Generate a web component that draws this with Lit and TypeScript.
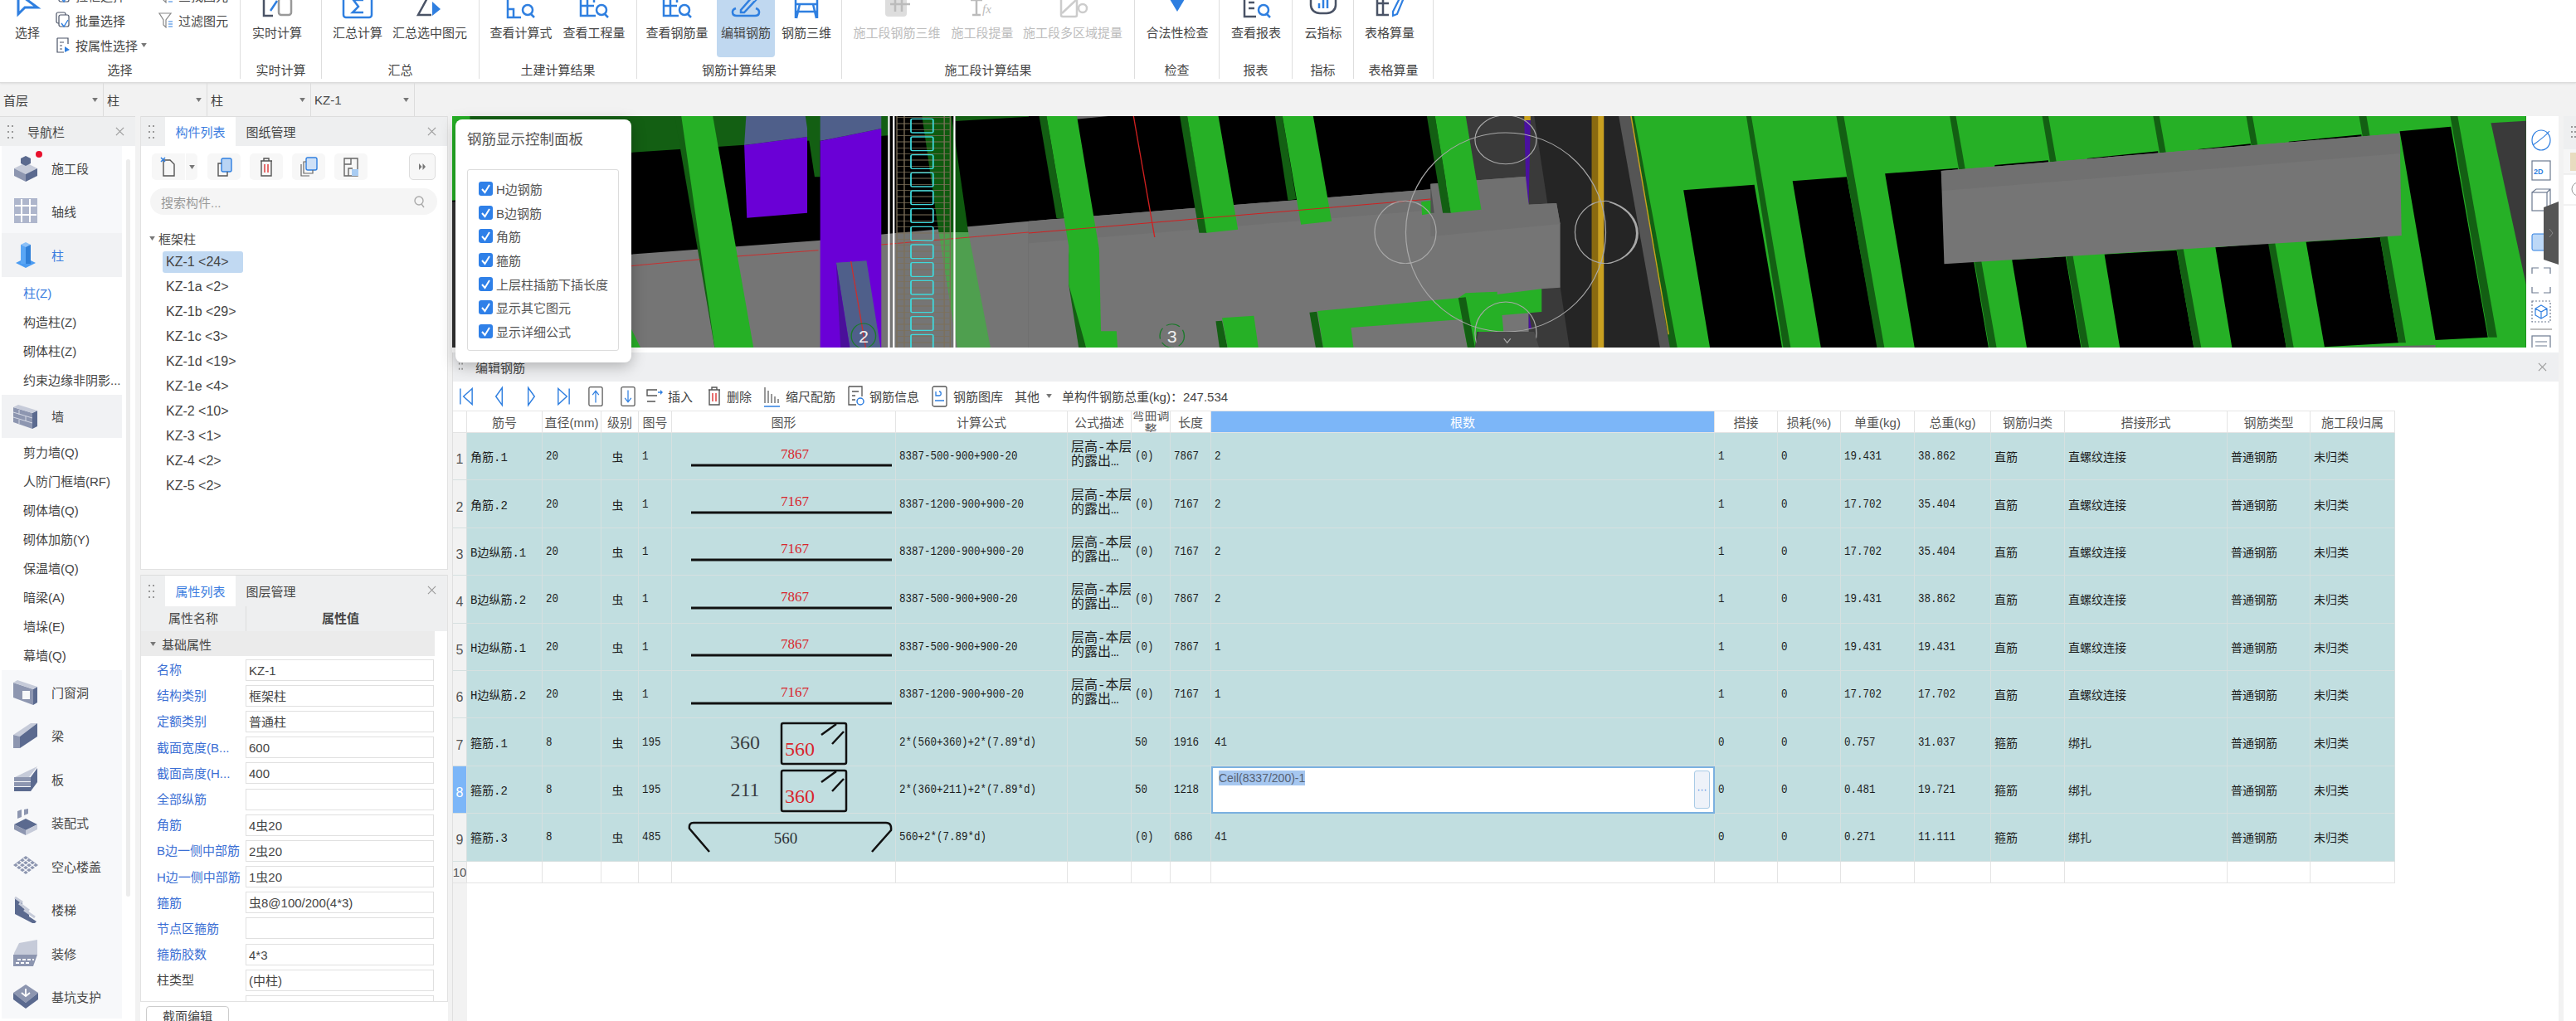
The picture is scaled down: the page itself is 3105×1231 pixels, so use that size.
import { LitElement, html, css, svg } from "lit";
import { customElement } from "lit/decorators.js";

const BLUE = "#2f7fe0";
const DARK = "#4a5366";

// ribbon icons, their tops run off the window on purpose
const ribbonIcons: Record<string, any> = {
  select: svg`<path d="M9 -8V17L17 9H32Z" fill="none" stroke="${BLUE}" stroke-width="3"/>`,
  live: svg`<path d="M4 -2V19H15" fill="none" stroke="${DARK}" stroke-width="2.5"/><rect x="22" y="-2" width="15" height="20" rx="3" fill="none" stroke="#999" stroke-width="2.5"/><path d="M12 13L20 1" stroke="${BLUE}" stroke-width="2.5"/>`,
  sum: svg`<rect x="3" y="-6" width="34" height="27" rx="3" fill="none" stroke="${BLUE}" stroke-width="2.5"/><path d="M27 0H15L21 8L14 15H27" fill="none" stroke="${BLUE}" stroke-width="2.5"/>`,
  sumSel: svg`<path d="M18 -4L6 18H22" fill="none" stroke="${DARK}" stroke-width="2.5"/><path d="M23 2L33 11L23 19Z" fill="${BLUE}"/>`,
  calcQ: svg`<path d="M4 -6V21H20M4 11H11V21" fill="none" stroke="${BLUE}" stroke-width="2.5"/><path d="M14 -4H36" stroke="${BLUE}" stroke-width="2.5"/><circle cx="28" cy="12" r="6" fill="none" stroke="${BLUE}" stroke-width="2.5"/><path d="M32 17L36 21" stroke="${BLUE}" stroke-width="2.5"/>`,
  gridQ: svg`<path d="M4 -6V19H22M4 7H20M12 -6V19M20 -6V3" fill="none" stroke="${BLUE}" stroke-width="2.5"/><circle cx="29" cy="12" r="6" fill="none" stroke="${BLUE}" stroke-width="2.5"/><path d="M33 17L37 21" stroke="${BLUE}" stroke-width="2.5"/>`,
  edit: svg`<path d="M8 10C2 12 3 19 9 19H31C37 19 38 12 32 10" fill="none" stroke="${BLUE}" stroke-width="2.5"/><path d="M14 12L28 -4L32 0L18 15H14Z" fill="none" stroke="${BLUE}" stroke-width="2.5"/>`,
  rebar3d: svg`<path d="M7 -6V22M33 -6V22M7 5H33M7 14H33M12 5L8 22M28 5L32 22" fill="none" stroke="${BLUE}" stroke-width="2.5"/>`,
  offA: svg`<rect x="6" y="-8" width="26" height="28" rx="4" fill="#ddd"/><path d="M12 -2H36M12 5H36M18 -8V14M26 -8V14" stroke="#bbb" stroke-width="2.5"/>`,
  offB: svg`<path d="M6 0H20M13 0V18M8 18H18" stroke="#bbb" stroke-width="2.5" fill="none"/><text x="20" y="16" font-size="15" font-style="italic" fill="#bbb" font-family="Liberation Serif">fx</text>`,
  offC: svg`<rect x="6" y="-8" width="19" height="28" rx="2" fill="none" stroke="#ccc" stroke-width="2.5"/><path d="M7 16L24 0" stroke="#ccc" stroke-width="2.5"/><circle cx="32" cy="10" r="5" fill="none" stroke="#ccc" stroke-width="2.5"/>`,
  check: svg`<path d="M8 -6L20 14L32 -6" fill="${BLUE}"/>`,
  report: svg`<path d="M6 -6V20H20M6 -6H30" fill="none" stroke="${DARK}" stroke-width="2.5"/><path d="M11 3H18M11 10H18" stroke="${DARK}" stroke-width="2.5"/><circle cx="29" cy="12" r="6" fill="none" stroke="${BLUE}" stroke-width="2.5"/><path d="M33 17L37 21" stroke="${BLUE}" stroke-width="2.5"/>`,
  cloud: svg`<path d="M5 -6V6C5 12 10 16 16 16H24C30 16 35 12 35 6V-6" fill="none" stroke="${DARK}" stroke-width="2.5"/><path d="M15 10V4M20 10V-2M25 10V0" stroke="${BLUE}" stroke-width="2.5"/>`,
  table: svg`<path d="M5 -6V18H19M5 4H19M12 -6V18" fill="none" stroke="${DARK}" stroke-width="2.5"/><path d="M24 14L32 -2L36 0L29 17L24 19Z" fill="none" stroke="${BLUE}" stroke-width="2.2"/>`,
};

const smallIcons: Record<string, any> = {
  batch: svg`<rect x="2" y="1" width="11" height="13" rx="2" fill="none" stroke="${DARK}" stroke-width="1.2"/><rect x="5" y="4" width="12" height="14" rx="2" fill="#fff" stroke="${DARK}" stroke-width="1.2"/><path d="M8 14L11 18L16 10" fill="none" stroke="${BLUE}" stroke-width="1.4"/>`,
  filter: svg`<path d="M2 2H16L10 10V19L7 16V10Z" fill="none" stroke="#888" stroke-width="1.2"/><path d="M13 12H18M13 15H18M13 18H18" stroke="${BLUE}" stroke-width="1.2"/>`,
  attr: svg`<path d="M3 2H16V9M3 2V19H11" fill="none" stroke="${DARK}" stroke-width="1.2"/><path d="M6 7H11M6 11H9M6 15H9" stroke="${DARK}" stroke-width="1.2"/><path d="M12 12L18 16L12 19Z" fill="${BLUE}"/>`,
  newDoc: svg`<path d="M6 5H14L19 10V24H6Z" fill="none" stroke="#555" stroke-width="1.4"/><path d="M3 2L8 7M8 2L3 7" stroke="${BLUE}" stroke-width="1.5"/>`,
  copy: svg`<rect x="9" y="3" width="12" height="16" rx="2" fill="#b9d4f4" stroke="${BLUE}" stroke-width="1.4"/><path d="M9 9H5V24H16V19" fill="none" stroke="#555" stroke-width="1.4"/>`,
  trash: svg`<path d="M5 6H19M9 6V3H15V6M6 6V24H18V6" fill="none" stroke="#555" stroke-width="1.4"/><path d="M10 10V20M14 10V20" stroke="#d33" stroke-width="1.4"/>`,
  dup: svg`<rect x="9" y="2" width="13" height="15" rx="2" fill="#cfe1f7" stroke="${BLUE}" stroke-width="1.4"/><path d="M9 7H6V21H17V17M3 10V24H13" fill="none" stroke="#666" stroke-width="1.2"/>`,
  save: svg`<path d="M4 3H20V24H4ZM4 10H12V3M9 24V15H14" fill="none" stroke="#666" stroke-width="1.4"/><rect x="13" y="16" width="8" height="8" fill="#a9ccf2"/>`,
  first: svg`<path d="M3 4V24" stroke="${BLUE}" stroke-width="1.5"/><path d="M18 4L7 14L18 24Z" fill="none" stroke="${BLUE}" stroke-width="1.5"/>`,
  prev: svg`<path d="M15 3L7 14L15 25Z" fill="none" stroke="${BLUE}" stroke-width="1.5"/>`,
  next: svg`<path d="M7 3L15 14L7 25Z" fill="none" stroke="${BLUE}" stroke-width="1.5"/>`,
  last: svg`<path d="M18 4V24" stroke="${BLUE}" stroke-width="1.5"/><path d="M4 4L15 14L4 24Z" fill="none" stroke="${BLUE}" stroke-width="1.5"/>`,
  up: svg`<rect x="2" y="2" width="17" height="24" rx="2" fill="none" stroke="#555" stroke-width="1.3"/><path d="M10.5 22V8M6.5 12L10.5 7L14.5 12" fill="none" stroke="${BLUE}" stroke-width="1.3"/>`,
  down: svg`<rect x="2" y="2" width="17" height="24" rx="2" fill="none" stroke="#555" stroke-width="1.3"/><path d="M10.5 6V20M6.5 16L10.5 21L14.5 16" fill="none" stroke="${BLUE}" stroke-width="1.3"/>`,
  insert: svg`<path d="M14 6H2V13H14M2 20H12" fill="none" stroke="#555" stroke-width="1.4"/><path d="M15 9H19" stroke="${BLUE}" stroke-width="1.5"/><path d="M18 6L21 9L18 12Z" fill="${BLUE}"/>`,
  scale: svg`<path d="M2 3V22M6 7V22M10 11V22M14 14V22M18 17V22" stroke="#555" stroke-width="1.2"/><path d="M1 26H20" stroke="${BLUE}" stroke-width="1.5"/>`,
  info: svg`<path d="M2 2H18V14M2 2V24H11" fill="none" stroke="#555" stroke-width="1.3"/><path d="M6 8H14M6 13H10M6 18H10" stroke="#555" stroke-width="1.3"/><circle cx="16" cy="20" r="4" fill="none" stroke="${BLUE}" stroke-width="1.5"/>`,
  library: svg`<rect x="2" y="2" width="17" height="24" rx="2" fill="none" stroke="#555" stroke-width="1.3"/><path d="M6 8V13H10C13 13 13 8 10 8M5 19H16" fill="none" stroke="${BLUE}" stroke-width="1.3"/>`,
};

const A = "#c6cbd9", B = "#8d96b0", C = "#5b6a8f";
const navIcons: Record<string, any> = {
  stage: svg`<polygon points="16,10 30,17 16,24 2,17" fill="${A}"/><polygon points="2,17 16,24 16,33 2,26" fill="${B}"/><polygon points="30,17 16,24 16,33 30,26" fill="${C}"/><polygon points="16,2 22,5 22,11 16,14 10,11 10,5" fill="${C}"/>`,
  axis: svg`<rect x="2" y="1" width="28" height="30" fill="#aeb6cc"/><path d="M11 2V30M21 2V30M3 10H29M3 21H29" stroke="#fff" stroke-width="2"/>`,
  column: svg`<polygon points="16,20 28,26 16,32 4,26" fill="#4b9cf2"/><rect x="10" y="4" width="12" height="23" fill="#2f7fd8"/><rect x="10" y="4" width="6" height="23" fill="#5aa6f5"/><polygon points="10,4 16,1 22,4 16,7" fill="#8cc0f7"/>`,
  wall: svg`<polygon points="1,6 24,13 24,32 1,24" fill="${B}"/><polygon points="24,13 30,10 30,29 24,32" fill="${C}"/><polygon points="1,6 7,3 30,10 24,13" fill="${A}"/><path d="M1 12L24 19M1 18L24 25M8 9V15M16 17V23M8 21V26" stroke="#d5d9e4" stroke-width="1"/>`,
  door: svg`<polygon points="1,5 25,13 25,32 1,23" fill="${B}"/><polygon points="25,13 30,10 30,29 25,32" fill="${C}"/><polygon points="1,5 6,2 30,10 25,13" fill="${A}"/><rect x="12" y="15" width="9" height="10" fill="#f7f8fa"/>`,
  beam: svg`<polygon points="1,16 22,2 30,2 9,18" fill="${A}"/><polygon points="9,18 30,2 30,18 9,32" fill="${C}"/><polygon points="1,16 9,18 9,32 1,32" fill="${B}"/>`,
  slab: svg`<polygon points="3,14 30,1 20,14 3,14" fill="${A}"/><rect x="2" y="14" width="20" height="5" fill="${B}"/><rect x="2" y="20" width="20" height="5" fill="${B}"/><rect x="2" y="26" width="20" height="5" fill="${C}"/><polygon points="22,14 30,3 30,20 22,31" fill="${C}"/>`,
  prefab: svg`<polygon points="16,12 30,19 16,26 2,19" fill="${C}"/><polygon points="2,19 16,26 16,32 2,25" fill="${B}"/><polygon points="30,19 16,26 16,32 30,25" fill="${A}"/><path d="M6 3L11 1V10L6 12ZM14 1L19 0V6L14 8Z" fill="${B}"/>`,
  hollow: svg`<polygon points="16,4 31,15 16,26 1,15" fill="${B}"/><path d="M9 10L24 21M13 7L28 18M5 13L20 24M23 10L8 21M19 7L4 18M27 13L12 24" stroke="#f7f8fa" stroke-width="1.5"/>`,
  stair: svg`<polygon points="3,2 12,8 12,14 20,20 20,25 29,31 26,34 3,22" fill="${C}"/><path d="M3 2L12 8M8 9L20 18M14 17L27 26" stroke="${A}" stroke-width="3"/>`,
  finish: svg`<polygon points="8,4 30,0 30,18 1,30 2,16" fill="${A}"/><polygon points="1,18 30,18 25,32 1,32" fill="${B}"/><path d="M6 24H26M4 28H22" stroke="#fff" stroke-width="2" stroke-dasharray="4 2"/>`,
  pit: svg`<polygon points="16,2 31,12 16,24 1,12" fill="${B}"/><polygon points="1,12 16,24 16,31 1,20" fill="${C}"/><polygon points="31,12 16,24 16,31 31,20" fill="${C}"/><path d="M16 7V15M11 12L16 16L21 12" stroke="#fff" stroke-width="1.8" fill="none"/>`,
};

const G = "#26b026", DG = "#135f13", GRAY = "#757575", VIO = "#6a00d6", SLATE = "#4f5f8a";

// polygons traced in the coordinates of three crops of the 3D view
const leftPolys: [string, string][] = [
  ["#333", "11,340 60,340 60,868 11,868"],
  [G, "11,30 60,30 60,330 11,335"],
  [GRAY, "60,590 495,530 1000,480 1190,455 1568,410 1568,868 60,868"],
  [DG, "60,30 1190,30 1190,100 60,200"],
  [G, "420,560 495,800 520,868 420,868"],
  [DG, "612,30 632,30 740,868 720,868"],
  [G, "630,30 715,30 825,868 720,868"],
  [SLATE, "805,30 970,30 970,105 800,135"],
  [VIO, "800,135 970,105 970,380 807,398"],
  [DG, "965,30 1005,30 1005,250 990,250"],
  [SLATE, "1005,30 1170,30 1170,75 1005,120"],
  [VIO, "1005,120 1170,75 1170,868 1005,868"],
  [SLATE, "1048,560 1130,553 1168,868 1085,868"],
  ["#4a0f9a", "1048,560 1085,868 1060,868"],
  ["#0f5a0f", "1280,30 1360,30 1405,450 1325,450"],
  ["#4f9f4f", "1325,450 1405,450 1465,868 1375,868"],
  [DG, "1370,30 1568,30 1568,32 1370,48"],
];

const midPolys: [string, string][] = [
  ["#252525", "1180,30 1568,30 1568,868 1180,868"],
  ["#3a3a3a", "1180,30 1365,30 1460,868 1200,868"],
  ["#6a6a6a", "95,30 215,30 100,45"],
  [GRAY, "0,410 1085,295 1085,275 1345,248 1350,350 1425,345 1435,420 1435,650 1385,655 1350,745 1350,810 1210,810 1200,868 0,868"],
  ["#707070", "0,410 1085,295 1085,370 0,490"],
  ["#707070", "1085,275 1345,248 1350,350 1425,345 1435,420 1085,465"],
  [DG, "28,30 48,30 95,400 75,400"],
  [DG, "108,520 155,868 135,868 108,640"],
  [G, "48,30 130,30 190,510 195,808 237,808 240,868 155,868 108,640 108,500"],
  [DG, "408,30 428,30 482,452 460,452"],
  [G, "428,30 512,30 565,440 480,452"],
  [DG, "665,30 685,30 722,330 700,335"],
  [G, "685,30 768,30 818,410 735,422"],
  [G, "1060,340 1088,335 1092,380 1062,388"],
  ["#505050", "1085,278 1095,380 1085,380"],
  [DG, "1075,30 1097,30 1140,380 1118,380"],
  [G, "1097,30 1180,30 1222,368 1140,380"],
  [DG, "505,772 522,770 537,868 515,868"],
  [G, "522,760 608,752 620,868 537,868"],
  [G, "780,735 1160,688 1180,670 1265,665 1265,675 1385,655 1385,738 1278,750 1282,810 1210,810 1205,868 1185,868 1170,765 870,795 877,868 795,868"],
  [DG, "758,740 778,737 795,868 775,868"],
  [DG, "1160,688 1180,685 1205,868 1185,868"],
  ["#8a6a10", "1520,30 1537,30 1537,868 1520,868"],
  ["#c9a020", "1537,30 1553,30 1553,868 1537,868"],
  ["#c9a020", "1338,30 1355,30 1355,45 1338,45"],
  ["#4a10a0", "1338,45 1355,45 1350,350 1342,250"],
  ["#4a10a0", "1350,742 1358,800 1350,800"],
];

const rightPolys: [string, string][] = [
  ["#252525", "0,30 35,30 100,868 0,868"],
  ["#555", "15,30 35,30 100,868 82,868"],
  [G, "35,30 1487,30 1487,868 100,868"],
  ["#000", "120,298 235,278 280,868 163,868"],
  ["#000", "297,265 385,250 435,868 343,868"],
  ["#000", "447,238 565,218 615,868 495,868"],
  ["#000", "625,207 712,190 712,230 625,230"],
  ["#000", "653,550 740,538 765,868 677,868"],
  ["#000", "775,183 890,157 890,200 775,200"],
  ["#000", "803,530 920,515 948,868 828,868"],
  ["#000", "955,150 1040,130 1040,160 955,160"],
  ["#000", "983,505 1070,490 1098,868 1010,868"],
  ["#000", "1102,122 1220,97 1220,130 1102,130"],
  ["#000", "1130,485 1250,468 1280,850 1160,865"],
  ["#000", "1282,85 1365,68 1425,830 1340,840"],
  ["#3a3a3a", "1430,55 1487,47 1487,640"],
  ["#6a6a6a", "1160,868 1340,858 1340,868"],
  [DG, "35,30 40,30 110,868 98,868"],
  [DG, "222,30 230,30 294,868 282,868"],
  [DG, "368,30 380,30 446,868 434,868"],
  [DG, "552,30 562,30 628,868 616,868"],
  [DG, "702,30 712,30 778,868 766,868"],
  [DG, "882,30 892,30 960,868 948,868"],
  [DG, "1033,30 1043,30 1110,868 1098,868"],
  [DG, "1216,30 1228,30 1292,850 1280,850"],
  [DG, "1364,30 1376,30 1440,830 1426,830"],
  [GRAY, "538,228 1282,92 1285,462 543,565"],
  ["#707070", "538,228 1282,92 1283,165 540,300"],
];

const polys = (list: [string, string][]) => list.map(([f, p]) => svg`<polygon points="${p}" fill="${f}"/>`);

type Row = {
  name: string; d: string; no: string; shape: any; formula: string; desc: boolean;
  adj: string; len: string; n: string; lap: string; unit: string; total: string; cls: string; form: string;
};

const barShape = (v: string) => svg`<svg class="shape" viewBox="0 0 270 57"><text x="148" y="31" text-anchor="middle" font-size="17" fill="#d8262c">${v}</text><path d="M23 39H265" stroke="#111" stroke-width="3"/></svg>`;
const hoopShape = (a: string, b: string) => svg`<svg class="shape" viewBox="0 0 270 57"><text x="88" y="37" text-anchor="middle" font-size="24" fill="#3a3f44">${a}</text><rect x="132" y="6" width="78" height="49" rx="2" fill="none" stroke="#111" stroke-width="2.5"/><path d="M180 20L198 7M193 31L207 16" stroke="#111" stroke-width="2.5"/><text x="136" y="45" font-size="24" fill="#d8262c">${b}</text></svg>`;
const hookShape = svg`<svg class="shape" viewBox="0 0 270 57"><path d="M45 46L21 18Q20 11 26 11H258Q265 11 264 20L241 46" fill="none" stroke="#111" stroke-width="2.5"/><text x="137" y="36" text-anchor="middle" font-size="19" fill="#2d3236">560</text></svg>`;

const straight = (name: string, v: string, formula: string, n: string, unit: string, total: string): Row =>
  ({ name, d: "20", no: "1", shape: barShape(v), formula, desc: true, adj: "(0)", len: v, n, lap: "1", unit, total, cls: "直筋", form: "直螺纹连接" });
const F1 = "8387-500-900+900-20", F2 = "8387-1200-900+900-20";

const rows: Row[] = [
  straight("角筋.1", "7867", F1, "2", "19.431", "38.862"),
  straight("角筋.2", "7167", F2, "2", "17.702", "35.404"),
  straight("B边纵筋.1", "7167", F2, "2", "17.702", "35.404"),
  straight("B边纵筋.2", "7867", F1, "2", "19.431", "38.862"),
  straight("H边纵筋.1", "7867", F1, "1", "19.431", "19.431"),
  straight("H边纵筋.2", "7167", F2, "1", "17.702", "17.702"),
  { name: "箍筋.1", d: "8", no: "195", shape: hoopShape("360", "560"), formula: "2*(560+360)+2*(7.89*d)", desc: false, adj: "50", len: "1916", n: "41", lap: "0", unit: "0.757", total: "31.037", cls: "箍筋", form: "绑扎" },
  { name: "箍筋.2", d: "8", no: "195", shape: hoopShape("211", "360"), formula: "2*(360+211)+2*(7.89*d)", desc: false, adj: "50", len: "1218", n: "", lap: "0", unit: "0.481", total: "19.721", cls: "箍筋", form: "绑扎" },
  { name: "箍筋.3", d: "8", no: "485", shape: hookShape, formula: "560+2*(7.89*d)", desc: false, adj: "(0)", len: "686", n: "41", lap: "0", unit: "0.271", total: "11.111", cls: "箍筋", form: "绑扎" },
];

const heads = ["筋号", "直径(mm)", "级别", "图号", "图形", "计算公式", "公式描述", "弯曲调整", "长度", "根数", "搭接", "损耗(%)", "单重(kg)", "总重(kg)", "钢筋归类", "搭接形式", "钢筋类型", "施工段归属"];

const props: [string, string, boolean][] = [
  ["名称", "KZ-1", true], ["结构类别", "框架柱", true], ["定额类别", "普通柱", true], ["截面宽度(B...", "600", true],
  ["截面高度(H...", "400", true], ["全部纵筋", "", true], ["角筋", "4虫20", true], ["B边一侧中部筋", "2虫20", true],
  ["H边一侧中部筋", "1虫20", true], ["箍筋", "虫8@100/200(4*3)", true], ["节点区箍筋", "", true], ["箍筋胶数", "4*3", true],
  ["柱类型", "(中柱)", false], ["", "", false],
];

const closeX = html`<svg class="x" viewBox="0 0 12 12"><path d="M1 1L11 11M11 1L1 11" stroke="#999" stroke-width="1.2"/></svg>`;
const grip = html`<svg class="grip" viewBox="0 0 10 20"><path d="M2 2h2v2H2zM7 2h2v2H7zM2 9h2v2H2zM7 9h2v2H7zM2 16h2v2H2zM7 16h2v2H7z" fill="#999"/></svg>`;
const arrow = html`<svg class="arrow" viewBox="0 0 8 6"><path d="M0 0H8L4 6Z" fill="#777"/></svg>`;

@customElement("app-root")
export class AppRoot extends LitElement {
  static styles = css`
    :host {
      display: block;
      width: 3105px;
      height: 1231px;
      overflow: hidden;
      background: #f2f2f2;
      font: 15px "Liberation Sans", "Noto Sans CJK SC", sans-serif;
      color: #454545;
    }
    svg { display: block; }

    .ribbon { display: flex; height: 100px; background: #fff; border-bottom: 1px solid #dcdcdc; overflow: hidden; box-sizing: border-box; box-shadow: 0 1px 2px #ddd; }
    .group { height: 95px; border-right: 1px solid #dedede; box-sizing: border-box; display: flex; flex-direction: column; flex: none; }
    .btns { display: flex; height: 69px; flex: none; }
    .glabel { text-align: center; line-height: 32px; white-space: nowrap; }
    .rb { display: flex; flex-direction: column; align-items: center; flex: none; border-radius: 0 0 4px 4px; white-space: nowrap; }
    .rb svg { width: 40px; height: 28px; overflow: hidden; flex: none; }
    .rb span { line-height: 24px; }
    .rb.on { background: #c0d8f0; }
    .rb.off { color: #bdbdbd; }
    .g-select { width: 290px; }
    .g-live { width: 98px; }
    .g-sum { width: 190px; }
    .g-civil { width: 190px; }
    .g-rebar { width: 247px; }
    .g-stage { width: 353px; }
    .g-check { width: 102px; }
    .g-report { width: 88px; }
    .g-index { width: 74px; }
    .g-table { width: 96px; }
    .sel { display: grid; grid-template-columns: 124px 100px; grid-auto-rows: 30px; margin-top: -21px; }
    .sel div { display: flex; align-items: center; gap: 5px; white-space: nowrap; }
    .sel svg { width: 20px; height: 20px; flex: none; }
    .sel .arrow { width: 7px; height: 5px; margin-left: -1px; }

    .combo { display: flex; height: 40px; margin-top: 0; }
    .combo div { width: 125px; box-sizing: border-box; border-right: 1px solid #dcdcdc; display: flex; align-items: center; justify-content: space-between; padding: 0 6px 0 4px; }

    .main { display: flex; height: 1091px; position: relative; }
    .arrow { width: 7px; height: 5px; }

    .nav { width: 163px; flex: none; background: #fff; display: flex; flex-direction: column; }
    .phead { height: 36px; flex: none; background: #eeeff0; display: flex; align-items: center; position: relative; box-sizing: border-box; border-top: 1px solid #ddd; }
    .grip { width: 10px; height: 20px; margin: 0 0 0 7px; flex: none; }
    .x { width: 11px; height: 11px; position: absolute; right: 13px; top: 12px; }
    .nav .phead span { margin-left: 16px; }
    .navbody { flex: 1; display: flex; min-height: 0; }
    .navlist { width: 145px; margin-left: 2px; flex: none; }
    .navtrack { width: 5px; margin: 16px 0 150px 5px; background: #ececec; border-radius: 3px; }
    .cat { height: 52.5px; background: #f7f8fa; display: flex; align-items: center; padding-left: 13px; gap: 15px; position: relative; }
    .cat svg { width: 32px; height: 33px; flex: none; }
    .cat.open { background: #f1f2f4; }
    .cat.blue, .sub.blue { color: #3b7de0; }
    .dot { position: absolute; left: 41px; top: 6px; width: 8px; height: 8px; border-radius: 50%; background: #e8112d; }
    .subs { padding-top: 2px; }
    .sub { height: 35px; line-height: 35px; padding-left: 26px; white-space: nowrap; }

    .gut1 { width: 6px; flex: none; }
    .gut2 { width: 5px; flex: none; }

    .leftcol { width: 371px; flex: none; display: flex; flex-direction: column; }
    .panel { background: #fff; border: 1px solid #e2e2e2; border-top: 0; box-sizing: border-box; display: flex; flex-direction: column; overflow: hidden; }
    .p1 { height: 547px; flex: none; }
    .p2 { height: 515px; flex: none; margin-top: 6px; }
    .p2 .phead { height: 38px; }
    .tab { height: 100%; width: 85px; display: flex; align-items: center; justify-content: center; flex: none; }
    .tab.on { background: #fff; color: #3b7de0; }
    .phead .gap { width: 12px; flex: none; }
    .ctools { display: flex; align-items: center; padding: 9px 0 0 13px; height: 32px; }
    .ct { width: 40px; height: 32px; background: #f7f7f7; border-radius: 5px; display: flex; align-items: center; justify-content: center; margin-right: 11px; flex: none; }
    .ct svg { width: 24px; height: 27px; }
    .ct.new { margin-right: 1px; border-radius: 5px 0 0 5px; }
    .ct.drop { width: 14px; margin-right: 12px; border-radius: 0 5px 5px 0; }
    .ct.drop svg { width: 7px; height: 5px; }
    .ct.more { width: 32px; margin: 0 0 0 39px; border: 1px solid #ddd; box-sizing: border-box; }
    .ct.more svg { width: 10px; height: 10px; }
    .search { margin: 10px 12px 0 11px; height: 32px; border-radius: 16px; background: #f5f5f5; display: flex; align-items: center; justify-content: space-between; padding: 0 14px 0 13px; color: #9a9a9a; }
    .search svg { width: 15px; height: 16px; }
    .tree { padding: 17px 0 0 10px; }
    .tree-head { display: flex; align-items: center; gap: 4px; height: 22px; }
    .items { padding: 5px 0 0 16px; font-size: 16px; }
    .item { height: 26px; line-height: 26px; margin-bottom: 4px; width: 97px; padding-left: 4px; box-sizing: border-box; white-space: nowrap; border-radius: 3px; }
    .item.on { background: #c1d9f2; }

    .colhead { display: grid; grid-template-columns: 126px 228px; height: 30px; line-height: 30px; text-align: center; background: #eeeff0; flex: none; }
    .colhead div + div { border-left: 1px solid #ddd; font-weight: bold; }
    .propgrp { height: 30px; background: #ebebeb; width: 354px; display: flex; align-items: center; gap: 7px; padding-left: 11px; box-sizing: border-box; flex: none; }
    .prow { display: grid; grid-template-columns: 126px 227px; height: 31.2px; flex: none; align-items: center; }
    .plabel { padding-left: 19px; white-space: nowrap; color: #3b6fd4; font-size: 15px; }
    .plabel.plain { color: #454545; }
    .pval { height: 26px; line-height: 25px; border: 1px solid #e0e0e0; box-sizing: border-box; padding-left: 3px; white-space: nowrap; margin-top: 2px; }
    .pbtn { margin: 5px 0 0 7px; width: 100px; height: 40px; background: #fff; border: 1px solid #ccc; border-radius: 4px; box-sizing: border-box; text-align: center; line-height: 24px; flex: none; }
    .leftfoot { flex: 1; background: #fff; overflow: hidden; }

    .center { width: 2539px; flex: none; display: flex; flex-direction: column; }
    .view { display: flex; height: 279px; flex: none; }
    .canvas { width: 2500px; height: 279px; flex: none; background: #000; }
    .vtools { width: 39px; height: 279px; background: #fff; flex: none; }
    .band { height: 6px; background: #fff; flex: none; }
    .edit { flex: 1; background: #fff; display: flex; flex-direction: column; min-height: 0; border-left: 1px solid #e0e0e0; }
    .ehead { height: 35px; flex: none; background: #eeeff1; display: flex; align-items: center; position: relative; }
    .ehead .grip { height: 14px; margin-left: 4px; }
    .ehead span { margin-left: 13px; }
    .ehead .x { right: 14px; top: 12px; }
    .etools { height: 35px; flex: none; display: flex; align-items: center; padding-left: 6px; white-space: nowrap; }
    .nav-btn { width: 20px; height: 28px; margin-right: 19px; flex: none; }
    .nav-btn + .etool { margin-left: -8px; }
    .etool { display: flex; align-items: center; gap: 5px; margin-right: 14px; flex: none; }
    .etool svg { width: 22px; height: 28px; flex: none; }
    .etools .arrow { margin: 0 12px 0 -6px; }

    .grid { flex: 1; display: flex; flex-direction: column; min-height: 0; }
    .tr { display: grid; width: 2341px; grid-template-columns: 17px 91px 71px 45px 40px 270px 207px 77px 47px 49px 607px 76px 76px 89px 92px 89px 196px 100px 102px; flex: none; }
    .tr.h { height: 27px; border-top: 1px solid #e6e6e6; box-sizing: border-box; }
    .tr.b { height: 57.4px; background: #c1dee0; }
    .tr.e { height: 26px; }
    .td { border-right: 1px solid #d6e0e0; border-bottom: 1px solid #d6e0e0; box-sizing: border-box; display: flex; align-items: center; padding-left: 4px; overflow: hidden; white-space: nowrap; color: #1c1c1c; font: 14px "Liberation Mono", "Noto Sans CJK SC", monospace; position: relative; min-width: 0; }
    .tr.e .td, .tr.h .td { border-color: #e4e4e4; }
    .th { justify-content: center; padding: 0; font: 15px "Liberation Sans", "Noto Sans CJK SC", sans-serif; color: #555; background: #fff; }
    .th.wrap { white-space: normal; line-height: 17px; text-align: center; width: 100%; flex: none; }
    .th.hot { background: #7cb6f8; color: #fff; }
    .idx { background: #f2f2f2; padding: 8px 0 0 0; justify-content: center; color: #555; font: 16px "Liberation Sans", sans-serif; }
    .idx.hot { background: #7cb6f8; color: #fff; }
    .tr.e .idx { padding: 0; font-size: 15px; }
    .num { display: inline-block; font-size: 12.5px; transform: scaleY(1.18); }
    .shape { width: 270px; height: 57px; flex: none; font-family: "Liberation Serif", serif; }
    .td.fig { padding: 0; }
    .desc { font-size: 16px; line-height: 17px; margin-top: -2px; }
    .rest { width: 17px; flex: 1; background: #f2f2f2; }
    .editor { padding: 3px 0 0 7px; border: 2px solid #7ab0e0; background: #fff; align-items: flex-start; color: #566070; font: 14px "Liberation Sans", sans-serif; }
    .editor mark { background: #a6c7f0; color: #566070; line-height: 18px; }
    .dots { position: absolute; right: 4px; top: 3px; bottom: 4px; width: 19px; box-sizing: border-box; border: 1px solid #a9cbe6; border-radius: 3px; background: #eef2f9; color: #3b7de0; display: flex; align-items: center; justify-content: center; font-size: 12px; }

    .gut3 { width: 6px; flex: none; }
    .strip { width: 15px; flex: none; background: #fff; }

    .popup { position: absolute; left: 549px; top: 4px; width: 212px; height: 293px; background: #fff; border-radius: 8px; box-shadow: 0 4px 18px rgba(0,0,0,.28); box-sizing: border-box; padding: 12px 14px 0; }
    .popup h4 { margin: 0; font-weight: normal; font-size: 17.5px; line-height: 24px; color: #555; white-space: nowrap; }
    .box { margin-top: 24px; width: 183px; height: 219px; border: 1px solid #dcdcdc; border-radius: 3px; box-sizing: border-box; padding: 8px 0 0 13px; }
    .chk { display: flex; align-items: center; gap: 4px; height: 28.7px; white-space: nowrap; color: #555; }
    .chk i { width: 17px; height: 17px; background: #2f80e8; border-radius: 3px; display: block; flex: none; }
    .chk svg { width: 17px; height: 17px; }
  `;

  rb(label: string, icon: string, width: number, cls = "") {
    return html`<div class="rb ${cls}" style="width:${width}px"><svg viewBox="0 0 40 28">${ribbonIcons[icon]}</svg><span>${label}</span></div>`;
  }

  ribbon() {
    const si = (k: string) => html`<svg viewBox="0 0 20 20">${smallIcons[k]}</svg>`;
    return html`<div class="ribbon">
      <div class="group g-select">
        <div class="btns">
          ${this.rb("选择", "select", 66)}
          <div class="sel">
            <div>${si("batch")}拉框选择</div><div>${si("filter")}查找图元</div>
            <div>${si("batch")}批量选择</div><div>${si("filter")}过滤图元</div>
            <div>${si("attr")}按属性选择 ${arrow}</div>
          </div>
        </div>
        <div class="glabel">选择</div>
      </div>
      <div class="group g-live"><div class="btns">${this.rb("实时计算", "live", 88)}</div><div class="glabel">实时计算</div></div>
      <div class="group g-sum"><div class="btns">${this.rb("汇总计算", "sum", 86)}${this.rb("汇总选中图元", "sumSel", 88)}</div><div class="glabel">汇总</div></div>
      <div class="group g-civil"><div class="btns">${this.rb("查看计算式", "calcQ", 100)}${this.rb("查看工程量", "gridQ", 76)}</div><div class="glabel">土建计算结果</div></div>
      <div class="group g-rebar"><div class="btns">${this.rb("查看钢筋量", "gridQ", 96)}${this.rb("编辑钢筋", "edit", 70, "on")}${this.rb("钢筋三维", "rebar3d", 76)}</div><div class="glabel">钢筋计算结果</div></div>
      <div class="group g-stage"><div class="btns">${this.rb("施工段钢筋三维", "offA", 132, "off")}${this.rb("施工段提量", "offB", 74, "off")}${this.rb("施工段多区域提量", "offC", 144, "off")}</div><div class="glabel">施工段计算结果</div></div>
      <div class="group g-check"><div class="btns">${this.rb("合法性检查", "check", 102)}</div><div class="glabel">检查</div></div>
      <div class="group g-report"><div class="btns">${this.rb("查看报表", "report", 88)}</div><div class="glabel">报表</div></div>
      <div class="group g-index"><div class="btns">${this.rb("云指标", "cloud", 74)}</div><div class="glabel">指标</div></div>
      <div class="group g-table"><div class="btns">${this.rb("表格算量", "table", 86)}</div><div class="glabel">表格算量</div></div>
    </div>`;
  }

  nav() {
    const cat = (label: string, icon: string, cls = "", dot = false) => html`<div class="cat ${cls}">${dot ? html`<i class="dot"></i>` : ""}<svg viewBox="0 0 32 33">${navIcons[icon]}</svg>${label}</div>`;
    const subs = (list: string[], first = false) => html`<div class="subs">${list.map((s, i) => html`<div class="sub ${first && i === 0 ? "blue" : ""}">${s}</div>`)}</div>`;
    return html`<div class="nav">
      <div class="phead">${grip}<span>导航栏</span>${closeX}</div>
      <div class="navbody">
        <div class="navlist">
          ${cat("施工段", "stage", "", true)}
          ${cat("轴线", "axis")}
          ${cat("柱", "column", "open blue")}
          ${subs(["柱(Z)", "构造柱(Z)", "砌体柱(Z)", "约束边缘非阴影..."], true)}
          ${cat("墙", "wall", "open")}
          <div>${["剪力墙(Q)", "人防门框墙(RF)", "砌体墙(Q)", "砌体加筋(Y)", "保温墙(Q)", "暗梁(A)", "墙垛(E)", "幕墙(Q)"].map((s) => html`<div class="sub">${s}</div>`)}</div>
          ${cat("门窗洞", "door")}${cat("梁", "beam")}${cat("板", "slab")}${cat("装配式", "prefab")}
          ${cat("空心楼盖", "hollow")}${cat("楼梯", "stair")}${cat("装修", "finish")}${cat("基坑支护", "pit")}
        </div>
        <div class="navtrack"></div>
      </div>
    </div>`;
  }

  leftcol() {
    const ct = (k: string, cls = "") => html`<div class="ct ${cls}"><svg viewBox="0 0 24 27">${smallIcons[k]}</svg></div>`;
    const items = ["KZ-1 <24>", "KZ-1a <2>", "KZ-1b <29>", "KZ-1c <3>", "KZ-1d <19>", "KZ-1e <4>", "KZ-2 <10>", "KZ-3 <1>", "KZ-4 <2>", "KZ-5 <2>"];
    return html`<div class="leftcol">
      <div class="panel p1">
        <div class="phead">${grip}<i class="gap"></i><div class="tab on">构件列表</div><div class="tab">图纸管理</div>${closeX}</div>
        <div class="ctools">
          ${ct("newDoc", "new")}
          <div class="ct drop">${arrow}</div>
          ${ct("copy")}${ct("trash")}${ct("dup")}${ct("save")}
          <div class="ct more"><svg viewBox="0 0 10 10"><path d="M1 1L4.500 5L1 9ZM5.500 1L9 5L5.500 9Z" fill="#777"/></svg></div>
        </div>
        <div class="search">搜索构件...<svg viewBox="0 0 15 16"><circle cx="7" cy="7" r="5" fill="none" stroke="#aaa" stroke-width="1.4"/><path d="M10 11L13 15" stroke="#aaa" stroke-width="1.4"/></svg></div>
        <div class="tree">
          <div class="tree-head">${arrow}框架柱</div>
          <div class="items">${items.map((t, i) => html`<div class="item ${i === 0 ? "on" : ""}">${t}</div>`)}</div>
        </div>
      </div>
      <div class="panel p2">
        <div class="phead">${grip}<i class="gap"></i><div class="tab on">属性列表</div><div class="tab">图层管理</div>${closeX}</div>
        <div class="colhead"><div>属性名称</div><div>属性值</div></div>
        <div class="propgrp">${arrow}基础属性</div>
        ${props.map(([k, v, blue]) => html`<div class="prow"><div class="plabel ${blue ? "" : "plain"}">${k}</div><div class="pval">${v}</div></div>`)}
      </div>
      <div class="leftfoot"><div class="pbtn">截面编辑</div></div>
    </div>`;
  }

  viewport() {
    const hoops = Array.from({ length: 13 }, (_, i) => 40 + i * 65);
    const ties = Array.from({ length: 38 }, (_, i) => 35 + i * 22);
    return html`<svg class="canvas" viewBox="545 140 2500 279">
      <rect x="545" y="140" width="2500" height="279" fill="#000"/>
      <g transform="translate(540,130) scale(0.4464,0.3333)">
        ${polys(leftPolys)}
        <path d="M495 572L680 548M780 537L1000 515M1170 495L1568 450" stroke="#c83030" stroke-width="3" fill="none"/>
        <path d="M1088 555L1128 868" stroke="#c83030" stroke-width="3"/>
        <ellipse cx="1122" cy="825" rx="33" ry="45" fill="none" stroke="#1a7a2a" stroke-width="3"/>
        <text x="1122" y="850" text-anchor="middle" font-size="60" fill="#eee" font-family="Liberation Sans" transform="translate(1122,0) scale(.8,1) translate(-1122,0)">2</text>
        ${ties.map((y) => svg`<path d="M1212 ${y}H1355" stroke="#7d705a" stroke-width="2.500"/>`)}
        <path d="M1212 30V868M1232 30V868M1340 30V868M1356 30V868" stroke="#7d705a" stroke-width="3"/>
        ${hoops.map((y) => svg`<rect x="1250" y="${y}" width="60" height="50" rx="4" fill="none" stroke="#3fd8dc" stroke-width="4"/>`)}
        <path d="M1188 30H1193V868H1188ZM1201 30H1206V868H1201ZM1365 30H1370V868H1365Z" fill="#fff"/>
      </g>
      <g transform="translate(1240,130) scale(0.4464,0.3333)">
        ${polys(midPolys)}
        <path d="M0 453L1085 330M283 30L340 468" stroke="#d02020" stroke-width="3" fill="none"/>
        <ellipse cx="387" cy="825" rx="33" ry="43" fill="none" stroke="#1a7a2a" stroke-width="3" stroke-dasharray="40 14"/>
        <text x="387" y="850" text-anchor="middle" font-size="60" fill="#eee" font-family="Liberation Sans" transform="translate(387,0) scale(.8,1) translate(-387,0)">3</text>
        <g fill="none" stroke="#a8a8a8" stroke-width="2.800">
          <ellipse cx="1288" cy="450" rx="270" ry="360"/>
          <ellipse cx="1017" cy="450" rx="83" ry="113"/>
          <ellipse cx="1288" cy="115" rx="83" ry="88"/>
          <ellipse cx="1558" cy="450" rx="83" ry="113"/>
          <ellipse cx="1288" cy="815" rx="83" ry="113"/>
        </g>
        <polygon points="1215,810 1365,810 1378,868 1205,868" fill="#4a4a4a"/>
        <path d="M1283 835L1292 850L1301 835" fill="none" stroke="#aaa" stroke-width="3"/>
      </g>
      <g transform="translate(1940,130) scale(0.743,0.3333)">
        ${polys(rightPolys)}
        <path d="M0 340C60 380 60 530 0 562" fill="none" stroke="#a8a8a8" stroke-width="4"/>
        <path d="M35 30L96 820" stroke="#c9a020" stroke-width="2"/>
      </g>
    </svg>`;
  }

  vtools() {
    return html`<svg class="vtools" viewBox="3045 140 39 279">
      <g fill="none" stroke="#6d7a90" stroke-width="1.2">
        <ellipse cx="3063" cy="169" rx="11" ry="12" stroke="${BLUE}"/>
        <path d="M3053 175C3060 170 3070 162 3073 158" stroke="${BLUE}"/>
        <rect x="3052" y="194" width="22" height="23"/>
        <rect x="3052" y="232" width="18" height="22"/>
        <path d="M3052 232L3057 228H3074V250L3070 254M3070 232L3074 228"/>
        <path d="M3052 330V323H3060M3066 323H3074V330M3052 346V353H3060M3066 353H3074V346"/>
        <rect x="3052" y="363" width="22" height="25" stroke-dasharray="2 2"/>
        <path d="M3063 368L3070 372V380L3063 384L3056 380V372ZM3063 376V384M3056 372L3063 376L3070 372" stroke="${BLUE}"/>
        <path d="M3050 397H3076" stroke="#aaa" stroke-width="1.500"/>
        <rect x="3052" y="405" width="22" height="22"/>
        <path d="M3056 412H3070M3056 417H3070"/>
      </g>
      <text x="3054" y="210" font-size="9" font-weight="bold" fill="${BLUE}" font-family="Liberation Sans">2D</text>
      <rect x="3052" y="282" width="18" height="20" rx="2" fill="#bcd8f7" stroke="${BLUE}"/>
      <polygon points="3084,243 3066,250 3066,313 3084,319" fill="#555"/>
      <path d="M3073 276L3077 281L3073 286" fill="none" stroke="#888" stroke-width="1"/>
    </svg>`;
  }

  strip() {
    return html`<svg class="strip" viewBox="0 0 15 1091">
      <rect width="15" height="40" fill="#eeeff0"/>
      <path d="M9 12h2v2H9zM13 12h2v2h-2zM9 18h2v2H9zM13 18h2v2h-2zM9 24h2v2H9zM13 24h2v2h-2z" fill="#999"/>
      <rect y="40" width="15" height="30" fill="#f6f6f6"/>
      <rect x="8" y="44" width="7" height="22" fill="#e8dcc0"/>
      <path d="M0 70H15M0 107H15" stroke="#e4e4e4"/>
      <circle cx="18" cy="88" r="8" fill="none" stroke="#999"/>
    </svg>`;
  }

  table() {
    const num = (v: string) => html`<span class="num">${v}</span>`;
    return html`<div class="grid">
      <div class="tr h">
        <div class="td th"></div>
        ${heads.map((h, i) => i === 7
          ? html`<div class="td th"><div class="th wrap" style="background:none">${h}</div></div>`
          : html`<div class="td th ${h === "根数" ? "hot" : ""}">${h}</div>`)}
      </div>
      ${rows.map((r, i) => html`<div class="tr b">
        <div class="td idx ${i === 7 ? "hot" : ""}">${i + 1}</div>
        <div class="td">${r.name}</div>
        <div class="td">${num(r.d)}</div>
        <div class="td">&nbsp;虫</div>
        <div class="td">${num(r.no)}</div>
        <div class="td fig">${r.shape}</div>
        <div class="td">${num(r.formula)}</div>
        <div class="td">${r.desc ? html`<div class="desc">层高-本层<br />的露出…</div>` : ""}</div>
        <div class="td">${num(r.adj)}</div>
        <div class="td">${num(r.len)}</div>
        ${r.n ? html`<div class="td">${num(r.n)}</div>` : html`<div class="td editor"><mark>Ceil(8337/200)-1</mark><div class="dots">···</div></div>`}
        <div class="td">${num(r.lap)}</div>
        <div class="td">${num("0")}</div>
        <div class="td">${num(r.unit)}</div>
        <div class="td">${num(r.total)}</div>
        <div class="td">${r.cls}</div>
        <div class="td">${r.form}</div>
        <div class="td">普通钢筋</div>
        <div class="td">未归类</div>
      </div>`)}
      <div class="tr e">
        <div class="td idx">10</div>
        ${heads.map(() => html`<div class="td"></div>`)}
      </div>
      <div class="rest"></div>
    </div>`;
  }

  edit() {
    const nb = (k: string) => html`<svg class="nav-btn" viewBox="0 0 21 28">${smallIcons[k]}</svg>`;
    const tool = (k: string, label: string) => html`<div class="etool"><svg viewBox="0 0 22 28">${smallIcons[k]}</svg>${label}</div>`;
    return html`<div class="edit">
      <div class="ehead"><svg class="grip" viewBox="0 0 10 20"><path d="M2 2h2v3H2zM7 2h2v3H7zM2 11h2v3H2zM7 11h2v3H7z" fill="#888"/></svg><span>编辑钢筋</span>${closeX}</div>
      <div class="etools">
        ${nb("first")}${nb("prev")}${nb("next")}${nb("last")}${nb("up")}${nb("down")}
        ${tool("insert", "插入")}${tool("trash", "删除")}${tool("scale", "缩尺配筋")}${tool("info", "钢筋信息")}${tool("library", "钢筋图库")}
        <div class="etool">其他</div>${arrow}
        <div>单构件钢筋总重(kg)：247.534</div>
      </div>
      ${this.table()}
    </div>`;
  }

  popup() {
    const opts = ["H边钢筋", "B边钢筋", "角筋", "箍筋", "上层柱插筋下插长度", "显示其它图元", "显示详细公式"];
    return html`<div class="popup">
      <h4>钢筋显示控制面板</h4>
      <div class="box">${opts.map((o) => html`<div class="chk"><i><svg viewBox="0 0 17 17"><path d="M4 9L7.500 13L13 4" fill="none" stroke="#fff" stroke-width="2"/></svg></i>${o}</div>`)}</div>
    </div>`;
  }

  render() {
    return html`
      ${this.ribbon()}
      <div class="combo">
        ${["首层", "柱", "柱", "KZ-1"].map((t) => html`<div>${t}${arrow}</div>`)}
      </div>
      <div class="main">
        ${this.nav()}
        <div class="gut1"></div>
        ${this.leftcol()}
        <div class="gut2"></div>
        <div class="center">
          <div class="view">${this.viewport()}${this.vtools()}</div>
          <div class="band"></div>
          ${this.edit()}
        </div>
        <div class="gut3"></div>
        ${this.strip()}
        ${this.popup()}
      </div>
    `;
  }
}
